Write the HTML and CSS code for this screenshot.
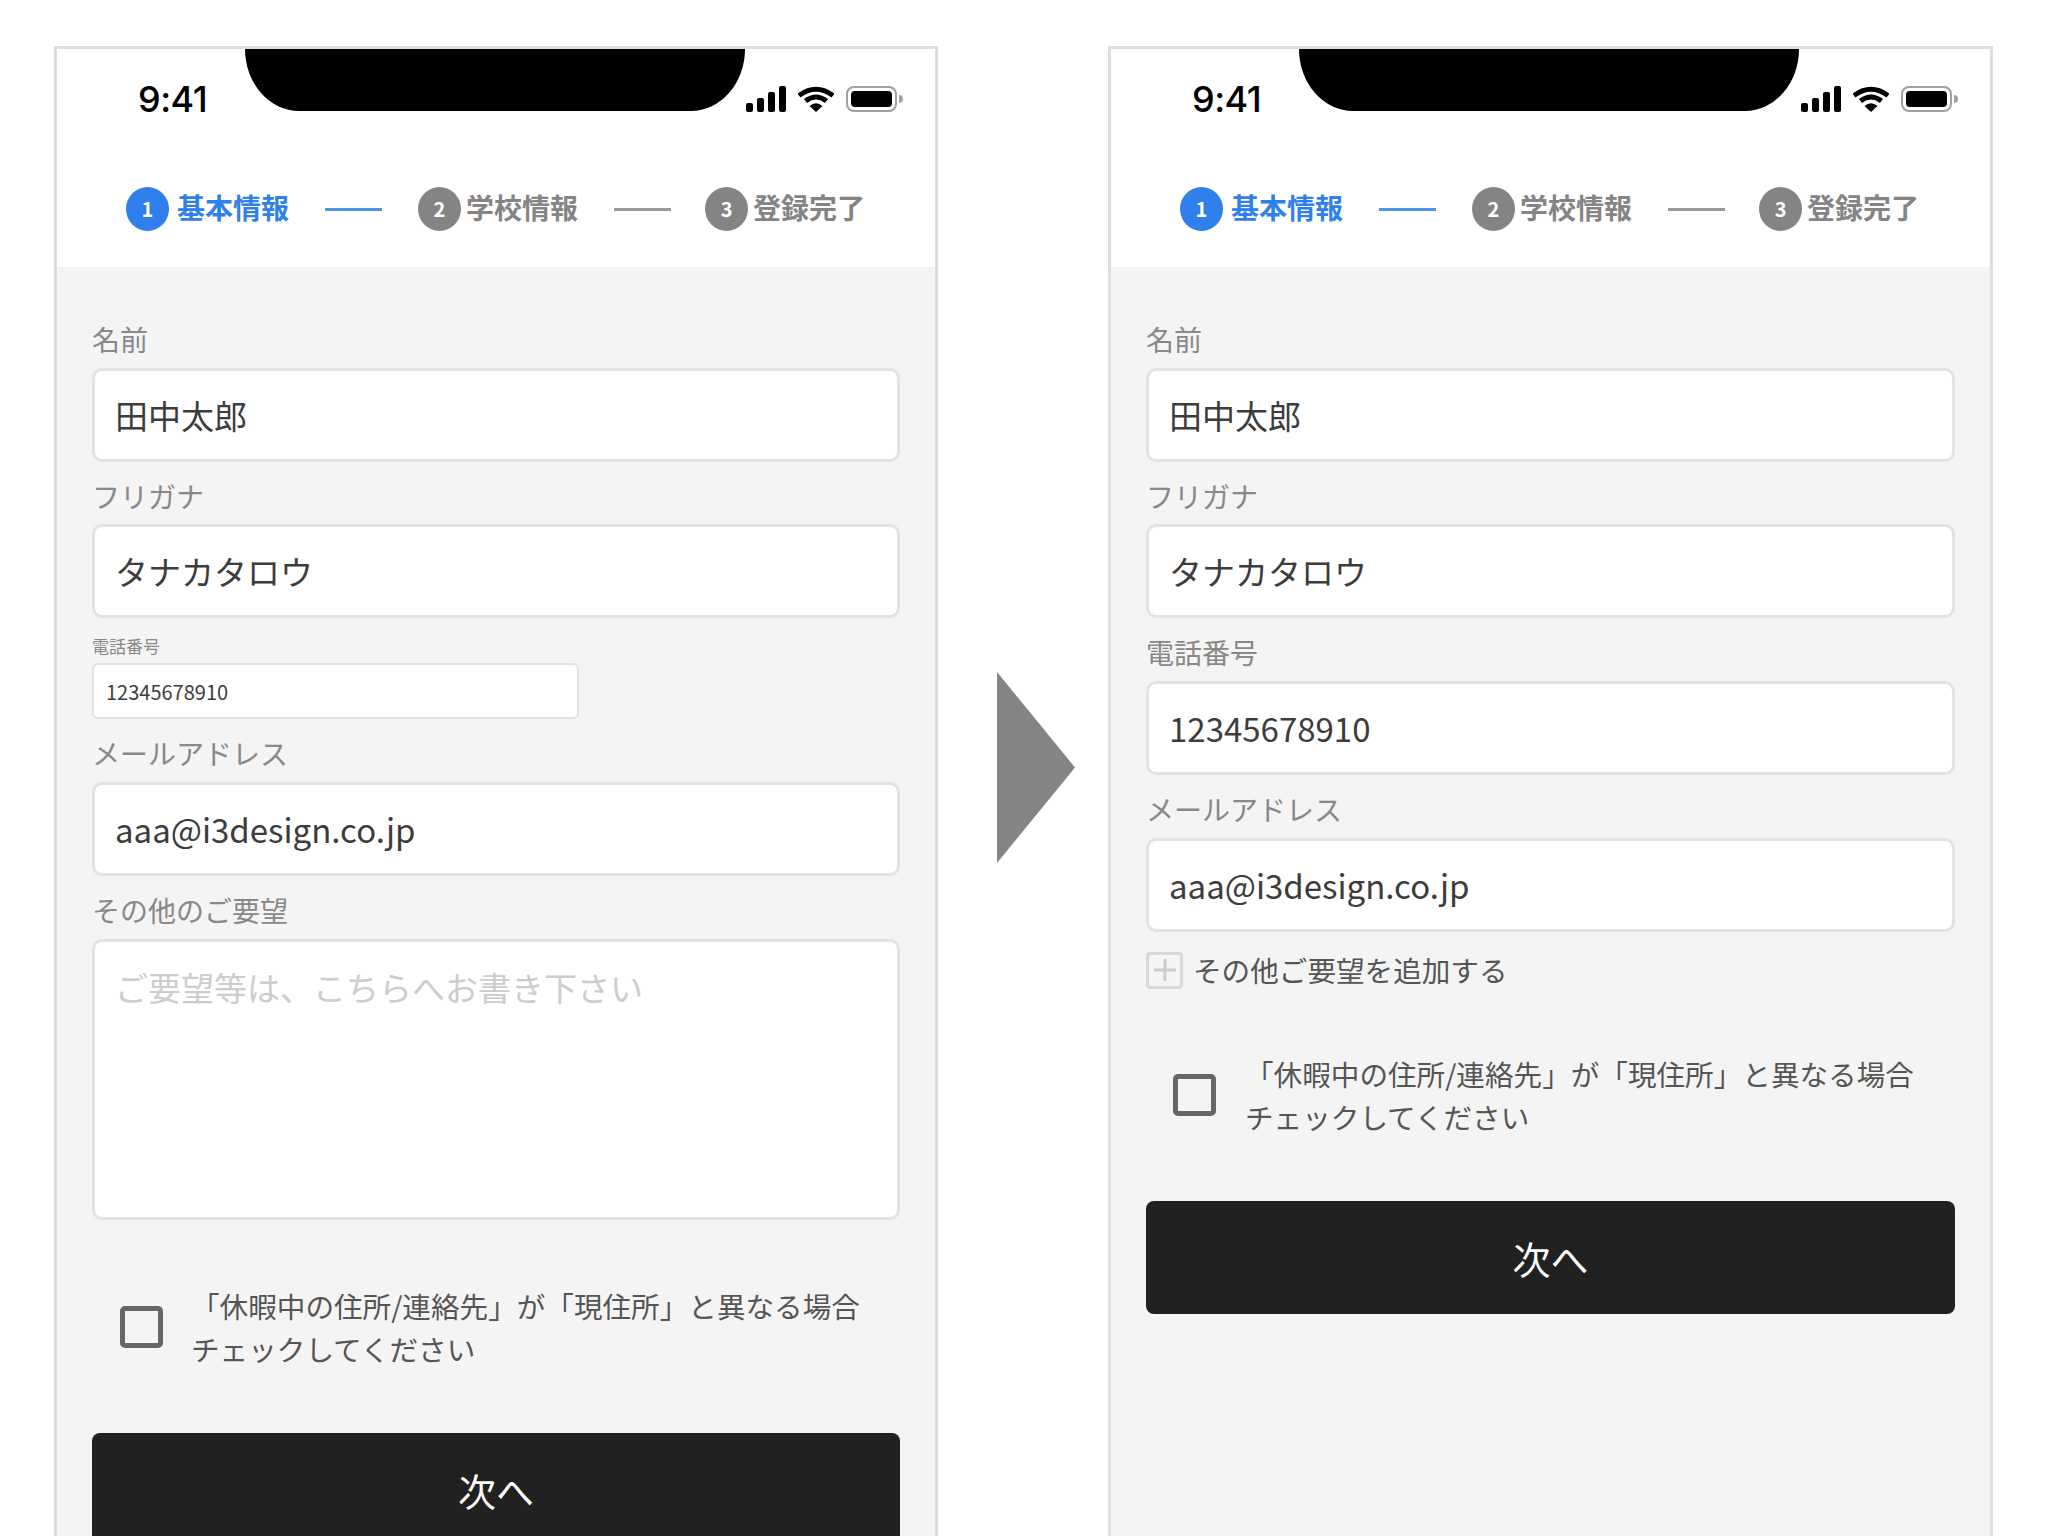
FILE: index.html
```html
<!DOCTYPE html>
<html lang="ja">
<head>
<meta charset="utf-8">
<title>フォーム比較</title>
<link rel="stylesheet" href="styles.css">
</head>
<body>
<div class="page">
  <section class="phone">
    <header class="top">
      <div class="notch"></div>
      <div class="status">
        <span class="time">9:41</span>
        <div class="status-icons">
          <svg class="signal" viewBox="0 0 40 26"><rect x="0" y="17" width="7" height="9" rx="2"/><rect x="11" y="12" width="7" height="14" rx="2"/><rect x="22" y="6" width="7" height="20" rx="2"/><rect x="33" y="0" width="7" height="26" rx="2"/></svg>
          <svg class="wifi" viewBox="0 0 36 26"><path class="wifi-arc" d="M1 9.500Q18 -3 35 9.500"/><path class="wifi-arc" d="M7.500 15Q18 7 28.500 15"/><path class="wifi-dot" d="M11.500 20Q18 14.500 24.500 20L18 26Z"/></svg>
          <div class="battery"><div class="battery-fill"></div></div>
          <div class="battery-nub"></div>
        </div>
      </div>
      <nav class="steps">
        <div class="step step-active"><span class="step-num">1</span><span class="step-name">基本情報</span></div>
        <span class="step-line step-line-active"></span>
        <div class="step"><span class="step-num">2</span><span class="step-name">学校情報</span></div>
        <span class="step-line step-line-last"></span>
        <div class="step"><span class="step-num">3</span><span class="step-name">登録完了</span></div>
      </nav>
    </header>
    <main class="form">
      <div class="field"><label class="label">名前</label><input class="input" value="田中太郎"></div>
      <div class="field"><label class="label">フリガナ</label><input class="input" value="タナカタロウ"></div>
      <div class="field field-small"><label class="label">電話番号</label><input class="input" value="12345678910"></div>
      <div class="field"><label class="label">メールアドレス</label><input class="input" value="aaa@i3design.co.jp"></div>
      <div class="field"><label class="label">その他のご要望</label><textarea class="input textarea" placeholder="ご要望等は、こちらへお書き下さい"></textarea></div>
      <div class="check check-after-area"><span class="check-box"></span><p class="check-text">「休暇中の住所/連絡先」が「現住所」と異なる場合<br>チェックしてください</p></div>
      <button class="next">次へ</button>
    </main>
  </section>

  <div class="arrow-col"><div class="arrow"></div></div>

  <section class="phone phone-after">
    <header class="top">
      <div class="notch"></div>
      <div class="status">
        <span class="time">9:41</span>
        <div class="status-icons">
          <svg class="signal" viewBox="0 0 40 26"><rect x="0" y="17" width="7" height="9" rx="2"/><rect x="11" y="12" width="7" height="14" rx="2"/><rect x="22" y="6" width="7" height="20" rx="2"/><rect x="33" y="0" width="7" height="26" rx="2"/></svg>
          <svg class="wifi" viewBox="0 0 36 26"><path class="wifi-arc" d="M1 9.500Q18 -3 35 9.500"/><path class="wifi-arc" d="M7.500 15Q18 7 28.500 15"/><path class="wifi-dot" d="M11.500 20Q18 14.500 24.500 20L18 26Z"/></svg>
          <div class="battery"><div class="battery-fill"></div></div>
          <div class="battery-nub"></div>
        </div>
      </div>
      <nav class="steps">
        <div class="step step-active"><span class="step-num">1</span><span class="step-name">基本情報</span></div>
        <span class="step-line step-line-active"></span>
        <div class="step"><span class="step-num">2</span><span class="step-name">学校情報</span></div>
        <span class="step-line step-line-last"></span>
        <div class="step"><span class="step-num">3</span><span class="step-name">登録完了</span></div>
      </nav>
    </header>
    <main class="form">
      <div class="field"><label class="label">名前</label><input class="input" value="田中太郎"></div>
      <div class="field"><label class="label">フリガナ</label><input class="input" value="タナカタロウ"></div>
      <div class="field"><label class="label">電話番号</label><input class="input" value="12345678910"></div>
      <div class="field"><label class="label">メールアドレス</label><input class="input" value="aaa@i3design.co.jp"></div>
      <div class="add-row"><span class="add-box"><svg class="add-plus" viewBox="0 0 22 22"><path d="M11 0V22M0 11H22"/></svg></span><span class="add-text">その他ご要望を追加する</span></div>
      <div class="check"><span class="check-box"></span><p class="check-text">「休暇中の住所/連絡先」が「現住所」と異なる場合<br>チェックしてください</p></div>
      <button class="next">次へ</button>
    </main>
  </section>
</div>
</body>
</html>
```
FILE: styles.css
```css
* { box-sizing: border-box; }
html, body { margin: 0; height: 1536px; overflow: hidden; background: #fff; }
body { font-family: "Noto Sans CJK JP", "Noto Sans", sans-serif; color: #3c3c3c; }

.page { display: flex; align-items: flex-start; padding: 46px 0 0 54px; }

.phone {
  width: 884px;
  height: 1600px;
  flex: none;
  border: 3px solid #dedede;
  border-bottom: 0;
  background: #f4f4f4;
  overflow: hidden;
}
.phone-after { width: 885px; }

.top { position: relative; height: 218px; background: #fff; }
.notch {
  position: absolute;
  top: 0;
  left: 188px;
  width: 500px;
  height: 62px;
  background: #000;
  border-radius: 0 0 54px 54px / 0 0 62px 62px;
}
.status {
  display: flex;
  justify-content: space-between;
  align-items: flex-start;
  height: 95px;
  padding: 37px 32px 0 81px;
}
.time {
  margin-top: -2px;
  font-family: Inter, "Liberation Sans", sans-serif;
  font-size: 36px;
  font-weight: 500;
  line-height: 30px;
  color: #000;
  letter-spacing: -0.5px;
}
.status-icons { display: flex; align-items: center; height: 26px; }
.signal { width: 40px; height: 26px; fill: #000; }
.wifi { width: 36px; height: 26px; margin-left: 12px; }
.wifi-arc { fill: none; stroke: #000; stroke-width: 5; }
.wifi-dot { fill: #000; }
.battery {
  width: 51px;
  height: 26px;
  margin-left: 12px;
  padding: 3px;
  border: 2px solid #a0a0a0;
  border-radius: 8px;
}
.battery-fill { height: 100%; background: #000; border-radius: 4px; }
.battery-nub { width: 4px; height: 8px; margin-left: 2px; background: #a0a0a0; border-radius: 0 4px 4px 0; }

.steps { display: flex; align-items: center; padding-left: 69px; height: 44px; margin-top: 43px; }
.step { display: flex; align-items: center; color: #848484; }
.step-num {
  width: 43px;
  height: 44px;
  margin-right: 5px;
  border-radius: 50%;
  background: #848484;
  color: #fff;
  font-size: 20px;
  font-weight: 700;
  line-height: 44px;
  text-align: center;
}
.step-name { margin-bottom: 3px; font-size: 28px; font-weight: 700; line-height: 41px; white-space: nowrap; }
.step-active { color: #2f80ed; }
.step-active .step-num { margin-right: 8px; background: #2f80ed; }
.step-line { width: 57px; height: 3px; margin: 0 36px; background: #999; }
.step-line-active { background: #4f93ea; }
.step-line-last { margin-right: 34px; }

.form { padding: 38px 35px 0; }
.field { margin-top: 14px; }
.label { display: block; height: 40px; margin-bottom: 8.67px; font-size: 28px; line-height: 40px; color: #888; }
.input {
  display: block;
  width: 100%;
  height: 94px;
  margin: 0;
  padding: 0 20px;
  background: #fff;
  border: 3px solid #e2e2e2;
  border-radius: 10px;
  font-family: inherit;
  font-size: 33px;
  color: #3c3c3c;
  outline: none;
}
.textarea { height: 281px; padding-top: 20px; line-height: 50px; resize: none; }
.textarea::placeholder { color: #ccc; opacity: 1; }

.field-small { margin-top: 16px; }
.field-small .label { height: 24px; margin-bottom: 5px; font-size: 17px; line-height: 24px; }
.field-small .input { width: 487px; height: 56px; padding: 0 12px; border-width: 2px; border-radius: 6px; font-size: 20px; }

.add-row { display: flex; align-items: center; height: 37px; margin-top: 20px; }
.add-box {
  display: flex;
  align-items: center;
  justify-content: center;
  width: 37px;
  height: 37px;
  margin-right: 10px;
  border: 3px solid #d8d8d8;
  border-radius: 4px;
}
.add-plus { width: 22px; height: 22px; fill: none; stroke: #ccc; stroke-width: 3; }
.add-text { font-size: 28.6px; line-height: 36px; color: #555; }

.check { display: flex; align-items: center; margin-top: 63px; padding-left: 27px; }
.check-after-area { margin-top: 64px; padding-left: 28px; }
.check-box {
  flex: none;
  width: 43px;
  height: 42px;
  margin: 0 29px 0 0;
  background: #f4f4f4;
  border: 5px solid #666;
  border-radius: 5px;
}
.check-after-area .check-box { margin-right: 28px; }
.check-text { margin: 0; font-size: 28.6px; line-height: 43px; color: #555; white-space: nowrap; }

.next {
  display: block;
  width: 100%;
  height: 113px;
  margin: 63px 0 0;
  padding: 0;
  border: 0;
  border-radius: 8px;
  background: #212121;
  color: #fff;
  font-family: inherit;
  font-size: 38px;
}

.arrow-col { flex: none; width: 170px; padding: 626px 0 0 59px; }
.arrow { width: 78px; height: 191px; background: #848484; clip-path: polygon(0 0, 100% 50%, 0 100%); }
```
